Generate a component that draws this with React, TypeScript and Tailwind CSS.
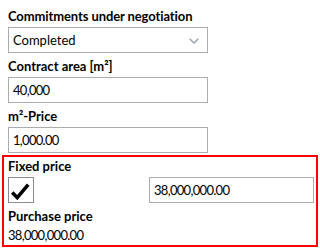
import React from "react";

function Box({ children, className = "" }: { children?: React.ReactNode; className?: string }) {
  return (
    <div className={`h-[26px] border border-[#acacac] flex items-center pl-[4px] ${className}`}>
      {children}
    </div>
  );
}

export default function App() {
  return (
    <div className="w-[320px] h-[249px] bg-white text-black text-[13px] leading-[16px] font-['Lato',sans-serif] pt-[8px] overflow-hidden">
      <div className="pl-[8px]">
        <div className="font-bold h-[16px] whitespace-nowrap tracking-[-0.1px]">Commitments under negotiation</div>
        <Box className="mt-[3px] w-[200px] justify-between pr-[8px]">
          <span>Completed</span>
          <svg width="10" height="6" viewBox="0 0 10 6" className="mt-[2px]">
            <path d="M0.7 0.7 L5 5 L9.3 0.7" stroke="#98a2ae" strokeWidth="1.4" fill="none" />
          </svg>
        </Box>
        <div className="mt-[5px] font-bold h-[16px] whitespace-nowrap">Contract area [m²]</div>
        <Box className="mt-[3px] w-[200px]"><span className="tracking-[-0.7px]">40,000</span></Box>
        <div className="mt-[5px] font-bold h-[16px] whitespace-nowrap">m²-Price</div>
        <Box className="mt-[3px] w-[200px]"><span className="tracking-[-0.7px]">1,000.00</span></Box>
      </div>
      <div className="mx-[2px] mt-[2px] border-2 border-[#ff0000] h-[92px] pl-[4px] pr-[2px] pt-[1px]">
        <div className="font-bold h-[16px] whitespace-nowrap">Fixed price</div>
        <div className="mt-[3px] flex justify-between items-start">
          <div className="w-[26px] h-[26px] border border-[#8c8c8c] relative">
            <svg width="24" height="24" viewBox="0 0 24 24" className="absolute left-0 top-0">
              <path d="M3.2 14.6 L8.2 19.6 L19.2 6.6" stroke="#000" strokeWidth="3.6" fill="none" strokeLinejoin="miter" />
            </svg>
          </div>
          <Box className="w-[165px]"><span className="tracking-[-0.7px]">38,000,000.00</span></Box>
        </div>
        <div className="mt-[5px] font-bold h-[16px] whitespace-nowrap">Purchase price</div>
        <div className="mt-[3px] h-[16px] whitespace-nowrap tracking-[-0.7px]">38,000,000.00</div>
      </div>
    </div>
  );
}
